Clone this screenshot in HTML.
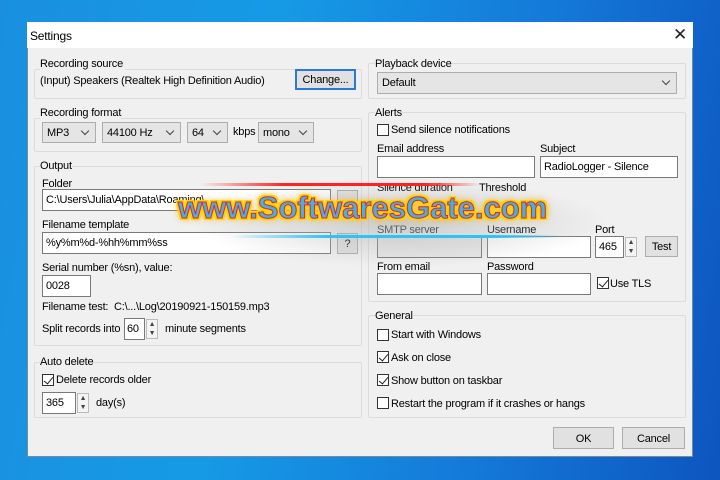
<!DOCTYPE html>
<html><head><meta charset="utf-8"><style>
*{margin:0;padding:0;box-sizing:border-box}
body{width:720px;height:480px;overflow:hidden;position:relative;font-family:"Liberation Sans",sans-serif;font-size:11px;letter-spacing:-0.2px;color:#000;
background:linear-gradient(100deg,#1a8fe0 0%,#169ae6 35%,#1478d8 70%,#0d55bf 100%);}
.a{position:absolute;white-space:nowrap}
#win{position:absolute;left:27px;top:22px;width:666px;height:435px;background:#f0f0f0;border:1px solid #7a8a9a}
.grp{position:absolute;border:1px solid #dcdcdc;border-radius:2px}
.inp{position:absolute;background:#fff;border:1px solid #7a7a7a;height:22px;padding:4px 3px}
.cmb{position:absolute;background:#e5e5e5;border:1px solid #adadad;height:21px;padding:4px 4px}
.cmb:after{content:"";position:absolute;right:7px;top:5px;width:5px;height:5px;border-right:1px solid #444;border-bottom:1px solid #444;transform:rotate(45deg)}
.btn{position:absolute;background:#e1e1e1;border:1px solid #adadad;height:21px;text-align:center;padding-top:4px}
.cb{position:absolute;width:12px;height:12px;border:1px solid #333;background:#fff}
.cb.on:after{content:"";position:absolute;left:3px;top:0px;width:4px;height:8px;border-right:1.5px solid #222;border-bottom:1.5px solid #222;transform:rotate(40deg)}
.sp{position:absolute;width:12px;border:1px solid #bbb;background:#f4f4f4;font-size:7px;text-align:center;line-height:9px;color:#444}
</style></head><body>
<div id="win"></div>
<div class="a" style="left:27px;top:22px;width:666px;height:26px;background:#fff"></div>
<div class="a" style="left:30px;top:29px;font-size:12px">Settings</div>
<div class="a" style="left:673px;top:25px;font-size:17px;color:#222">✕</div>

<div class="grp" style="left:34px;top:69px;width:328px;height:30px"></div>
<div class="a" style="left:40px;top:58px;background:#f0f0f0;padding-right:2px">Recording source</div>
<div class="a" style="left:40px;top:75px">(Input) Speakers (Realtek High Definition Audio)</div>
<div class="btn" style="left:295px;top:69px;width:61px;border:2px solid #2b79d6;padding-top:3px">Change...</div>

<div class="grp" style="left:34px;top:118px;width:328px;height:34px"></div>
<div class="a" style="left:40px;top:107px;background:#f0f0f0">Recording format</div>
<div class="cmb" style="left:42px;top:122px;width:54px">MP3</div>
<div class="cmb" style="left:102px;top:122px;width:79px">44100 Hz</div>
<div class="cmb" style="left:187px;top:122px;width:41px">64</div>
<div class="a" style="left:233px;top:126px">kbps</div>
<div class="cmb" style="left:258px;top:122px;width:56px">mono</div>

<div class="grp" style="left:34px;top:166px;width:328px;height:180px"></div>
<div class="a" style="left:40px;top:160px;background:#f0f0f0">Output</div>
<div class="a" style="left:42px;top:178px">Folder</div>
<div class="inp" style="left:42px;top:189px;width:289px">C:\Users\Julia\AppData\Roaming\</div>
<div class="btn" style="left:337px;top:190px;width:21px"></div>
<div class="a" style="left:42px;top:219px">Filename template</div>
<div class="inp" style="left:42px;top:232px;width:289px">%y%m%d-%hh%mm%ss</div>
<div class="btn" style="left:337px;top:233px;width:21px">?</div>
<div class="a" style="left:42px;top:262px">Serial number (%sn), value:</div>
<div class="inp" style="left:42px;top:275px;width:49px">0028</div>
<div class="a" style="left:42px;top:301px">Filename test:&nbsp; C:\...\Log\20190921-150159.mp3</div>
<div class="a" style="left:42px;top:323px">Split records into</div>
<div class="inp" style="left:124px;top:318px;width:21px;padding:4px 2px">60</div>
<div class="sp" style="left:146px;top:319px;height:20px">▲<br>▼</div>
<div class="a" style="left:165px;top:323px">minute segments</div>

<div class="grp" style="left:34px;top:362px;width:328px;height:56px"></div>
<div class="a" style="left:40px;top:356px;background:#f0f0f0">Auto delete</div>
<div class="cb on" style="left:42px;top:374px"></div>
<div class="a" style="left:56px;top:374px">Delete records older</div>
<div class="inp" style="left:42px;top:392px;width:34px">365</div>
<div class="sp" style="left:77px;top:393px;height:20px">▲<br>▼</div>
<div class="a" style="left:96px;top:397px">day(s)</div>

<div class="grp" style="left:368px;top:63px;width:318px;height:36px"></div>
<div class="a" style="left:375px;top:58px;background:#f0f0f0">Playback device</div>
<div class="cmb" style="left:377px;top:72px;width:300px;height:22px">Default</div>

<div class="grp" style="left:368px;top:112px;width:318px;height:190px"></div>
<div class="a" style="left:375px;top:107px;background:#f0f0f0">Alerts</div>
<div class="cb" style="left:377px;top:124px"></div>
<div class="a" style="left:391px;top:124px">Send silence notifications</div>
<div class="a" style="left:377px;top:143px">Email address</div>
<div class="inp" style="left:377px;top:156px;width:158px"></div>
<div class="a" style="left:540px;top:143px">Subject</div>
<div class="inp" style="left:540px;top:156px;width:138px">RadioLogger - Silence</div>
<div class="a" style="left:377px;top:182px">Silence duration</div>
<div class="a" style="left:479px;top:182px">Threshold</div>
<div class="a" style="left:377px;top:224px">SMTP server</div>
<div class="a" style="left:487px;top:224px">Username</div>
<div class="a" style="left:595px;top:224px">Port</div>
<div class="inp" style="left:377px;top:236px;width:105px;background:#e8e8e8"></div>
<div class="inp" style="left:487px;top:236px;width:104px"></div>
<div class="inp" style="left:595px;top:236px;width:29px">465</div>
<div class="sp" style="left:625px;top:237px;height:20px">▲<br>▼</div>
<div class="btn" style="left:645px;top:236px;width:33px">Test</div>
<div class="a" style="left:377px;top:261px">From email</div>
<div class="a" style="left:487px;top:261px">Password</div>
<div class="inp" style="left:377px;top:273px;width:105px"></div>
<div class="inp" style="left:487px;top:273px;width:104px"></div>
<div class="cb on" style="left:597px;top:277px"></div>
<div class="a" style="left:610px;top:278px">Use TLS</div>

<div class="grp" style="left:368px;top:315px;width:318px;height:103px"></div>
<div class="a" style="left:375px;top:310px;background:#f0f0f0">General</div>
<div class="cb" style="left:377px;top:329px"></div><div class="a" style="left:391px;top:329px">Start with Windows</div>
<div class="cb on" style="left:377px;top:351px"></div><div class="a" style="left:391px;top:352px">Ask on close</div>
<div class="cb on" style="left:377px;top:374px"></div><div class="a" style="left:391px;top:375px">Show button on taskbar</div>
<div class="cb" style="left:377px;top:397px"></div><div class="a" style="left:391px;top:398px">Restart the program if it crashes or hangs</div>

<div class="btn" style="left:553px;top:427px;width:61px;height:22px;padding-top:5px">OK</div>
<div class="btn" style="left:622px;top:427px;width:63px;height:22px;padding-top:5px">Cancel</div>

<div class="a" style="left:190px;top:178px;width:420px;height:90px;background:radial-gradient(ellipse at 50% 50%,rgba(180,180,180,.6),rgba(220,220,220,0) 70%)"></div>
<div class="a" style="left:200px;top:183px;width:280px;height:3px;background:linear-gradient(90deg,rgba(255,40,40,0),#f22 30%,#f22 80%,rgba(255,40,40,0))"></div>
<div class="a" style="left:230px;top:235px;width:330px;height:3px;background:linear-gradient(90deg,rgba(40,200,255,0),#2cc4f5 30%,#2cc4f5 80%,rgba(40,200,255,0))"></div>
<div class="a" style="left:178px;top:190px;font-size:31px;font-weight:bold;color:#3ab6ee;letter-spacing:0;-webkit-text-stroke:1px #e22;
text-shadow:0 0 1px #f22,2px 2px 0 #ffd400,-2px -2px 0 #ffd400,2px -2px 0 #ffd400,-2px 2px 0 #ffd400,0 0 6px #ffd400,0 0 9px #f5a000">www.SoftwaresGate.com</div>
</body></html>
